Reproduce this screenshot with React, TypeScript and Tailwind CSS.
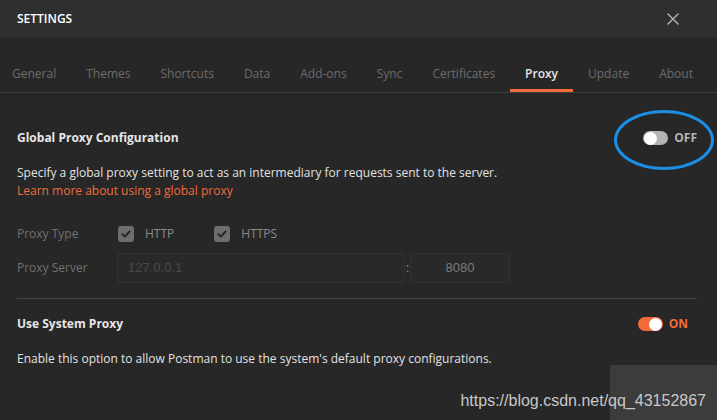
import React from "react";

const tabs = [
  "General",
  "Themes",
  "Shortcuts",
  "Data",
  "Add-ons",
  "Sync",
  "Certificates",
  "Proxy",
  "Update",
  "About",
];

function Toggle({ on }: { on: boolean }) {
  return (
    <div
      className={`w-[25px] h-[14px] rounded-full flex items-center px-[1px] ${
        on ? "bg-[#f26b3a] justify-end" : "bg-[#b4b4b4] justify-start"
      }`}
    >
      <div className="w-[13px] h-[13px] rounded-full bg-white" />
    </div>
  );
}

function Checkbox() {
  return (
    <div className="w-[16px] h-[16px] rounded-[3px] bg-[#6e6e6e] flex items-center justify-center">
      <svg width="12" height="12" viewBox="0 0 12 12" fill="none">
        <path
          d="M2.5 6.2 L5 8.6 L9.6 3.4"
          stroke="#262626"
          strokeWidth="2"
          strokeLinecap="round"
          strokeLinejoin="round"
        />
      </svg>
    </div>
  );
}

export default function App() {
  return (
    <div
      className="relative w-[717px] h-[420px] overflow-hidden bg-[#272727] text-[12px]"
      style={{ fontFamily: '"Open Sans", "Noto Sans", sans-serif' }}
    >
      {/* header */}
      <div className="h-[38px] bg-[#2f2f2f] flex items-center justify-between pl-[17px] pr-[38px]">
        <span className="text-[12px] font-semibold text-white">SETTINGS</span>
        <svg width="12" height="12" viewBox="0 0 12 12">
          <path
            d="M1 1 L11 11 M11 1 L1 11"
            stroke="#a8a8a8"
            strokeWidth="1.6"
            strokeLinecap="round"
          />
        </svg>
      </div>

      {/* tabs */}
      <div className="h-[55px] flex items-end border-b border-[#3a3a3a] -ml-[3px]">
        {tabs.map((t) => (
          <div
            key={t}
            className={`px-[15px] pb-[6px] leading-[18px] whitespace-nowrap border-b-[3px] ${
              t === "Proxy"
                ? "border-[#f26b3a] text-[#e4e4e4] font-semibold"
                : "border-transparent text-[#6c6c6c]"
            }`}
          >
            {t}
          </div>
        ))}
      </div>

      {/* content */}
      <div className="pl-[17px] pr-[20px] leading-[18px]">
        <div className="mt-[36px] flex items-center justify-between">
          <span className="font-bold text-[#e6e6e6]">Global Proxy Configuration</span>
          <div className="flex items-center gap-[6px]">
            <Toggle on={false} />
            <span className="font-bold text-[#b4b4b4]">OFF</span>
          </div>
        </div>
        <p className="mt-[17px] text-[#e2e2e2]">
          Specify a global proxy setting to act as an intermediary for requests sent to the server.
        </p>
        <p className="text-[#f26b3a]">Learn more about using a global proxy</p>

        <div className="mt-[19px] h-[30px] flex items-center">
          <span className="w-[101px] text-[#707070]">Proxy Type</span>
          <Checkbox />
          <span className="ml-[11px] text-[#8a8a8a]">HTTP</span>
          <div className="ml-[40px]">
            <Checkbox />
          </div>
          <span className="ml-[11px] text-[#8a8a8a]">HTTPS</span>
        </div>

        <div className="mt-[4px] h-[30px] flex items-center">
          <span className="w-[100px] text-[#707070]">Proxy Server</span>
          <div
            className="w-[288px] h-[30px] rounded-[3px] border border-[#333333] bg-[#292929] flex items-center pl-[10px] text-[13px] text-[#4a4a4a]"
            style={{ fontFamily: '"Liberation Sans", Arial, sans-serif' }}
          >
            127.0.0.1
          </div>
          <span className="w-[5px] text-center text-[#8a8a8a]">:</span>
          <div
            className="w-[100px] h-[30px] rounded-[3px] border border-[#333333] bg-[#292929] flex items-center justify-center text-[13px] text-[#7c7c7c]"
            style={{ fontFamily: '"Liberation Sans", Arial, sans-serif' }}
          >
            8080
          </div>
        </div>

        <div className="mt-[15px] h-px bg-[#444444]" />

        <div className="mt-[16px] flex items-center justify-between">
          <span className="font-bold text-[#e6e6e6]">Use System Proxy</span>
          <div className="flex items-center gap-[6px] mr-[9px]">
            <Toggle on={true} />
            <span className="font-bold text-[#f26b3a]">ON</span>
          </div>
        </div>
        <p className="mt-[17px] text-[#e2e2e2]">
          Enable this option to allow Postman to use the system's default proxy configurations.
        </p>
      </div>

      {/* annotation ellipse */}
      <div className="absolute left-[614px] top-[110px] w-[100px] h-[60px] rounded-[50%] border-[3px] border-[#1a8fe6]" />

      {/* watermark */}
      <div className="absolute left-[610px] top-[365px] w-[107px] h-[55px] bg-[#3c3c3c]" />
      <span
        className="absolute right-[11px] top-[391px] text-[16px] leading-[20px] text-[#c8c8c8]"
        style={{ fontFamily: '"Liberation Sans", Arial, sans-serif' }}
      >
        https://blog.csdn.net/qq_43152867
      </span>
    </div>
  );
}
